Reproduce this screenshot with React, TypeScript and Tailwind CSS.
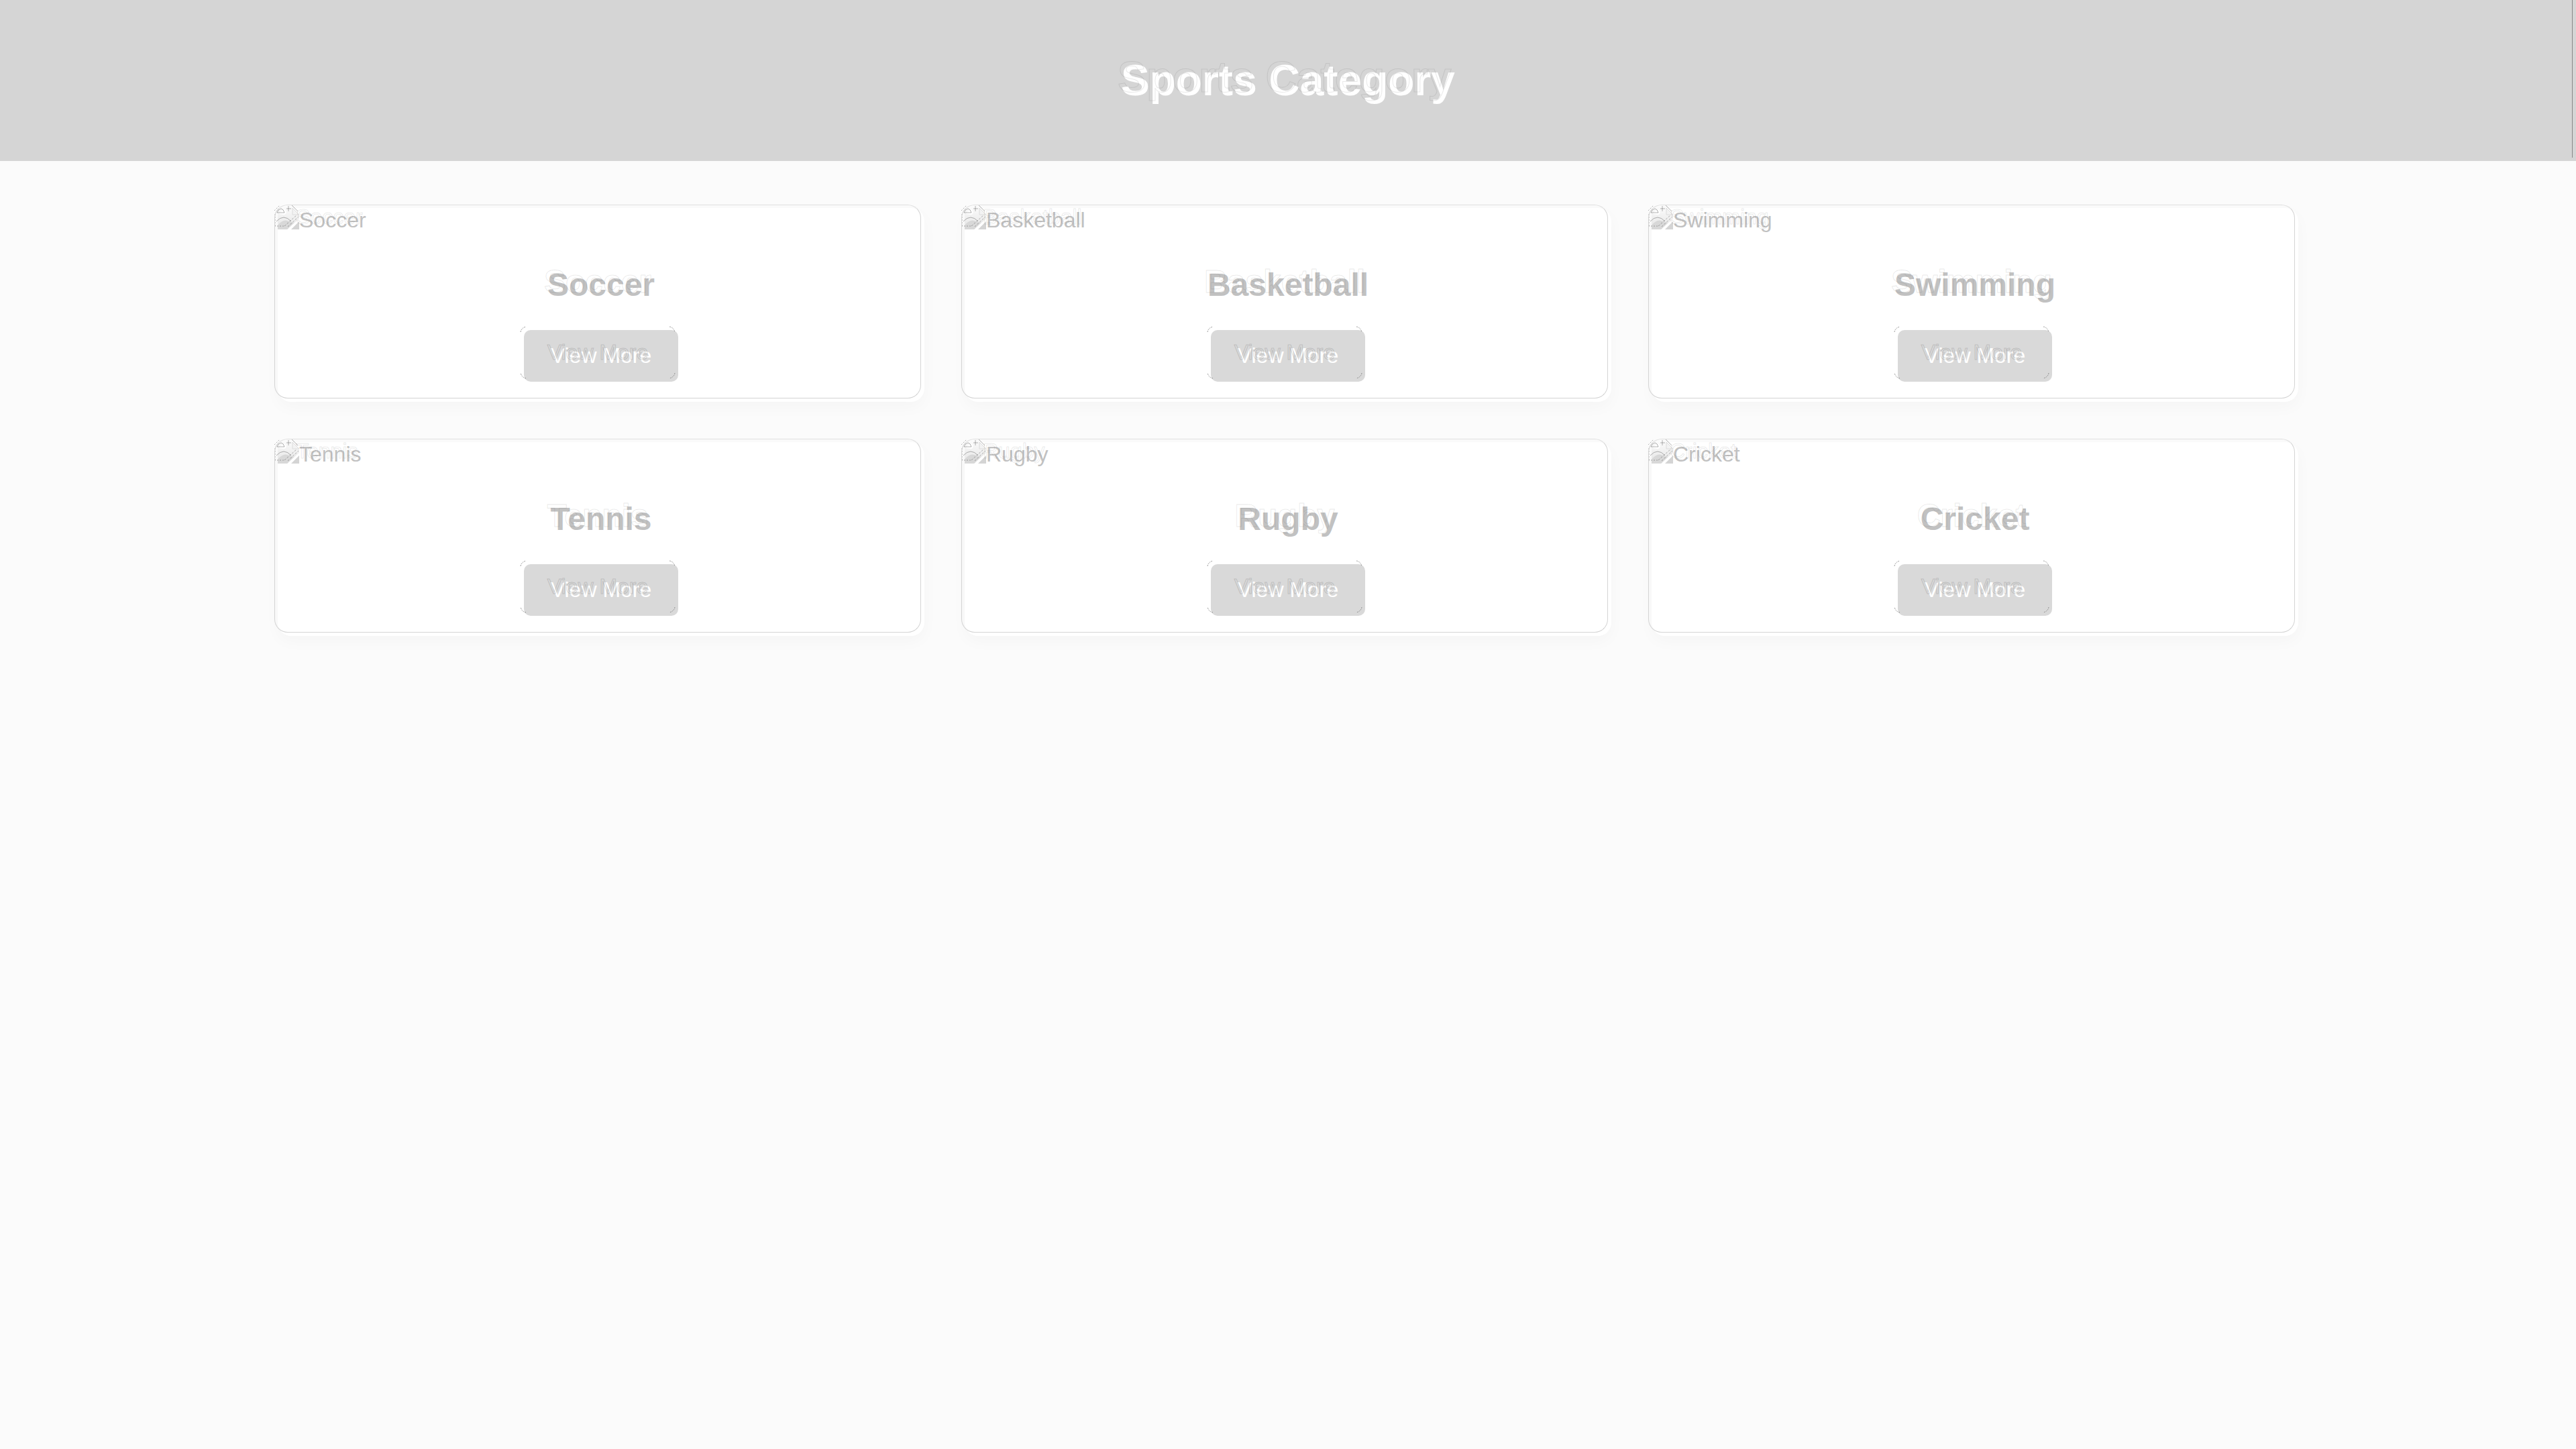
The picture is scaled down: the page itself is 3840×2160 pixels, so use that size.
const sports = ['Soccer', 'Basketball', 'Swimming', 'Tennis', 'Rugby', 'Cricket'];

const echo =
  'relative before:pointer-events-none before:absolute before:-top-[5px] before:-left-[5px] before:whitespace-nowrap before:text-transparent before:content-[attr(data-echo)]';
const faintEcho = 'before:[-webkit-text-stroke:1px_rgba(70,70,70,0.12)]';
const strongEcho = 'before:[-webkit-text-stroke:1px_rgba(70,70,70,0.2)]';

function MissingPicture() {
  return (
    <svg viewBox="0 0 32 32" className="size-8 shrink-0 overflow-visible" aria-hidden="true">
      <defs>
        <linearGradient id="sheet" x1="0" y1="0" x2="0" y2="1">
          <stop offset="0" stopColor="#fafafa" />
          <stop offset="1" stopColor="#e4e4e4" />
        </linearGradient>
      </defs>
      <path d="M0 0H22L32 10V16L14 32H0Z" fill="url(#sheet)" />
      <path d="M0 32V26Q9 14 19 21L24 22L14 32Z" fill="#d8d8d8" />
      <path d="M20 32L32 20V32Z" fill="#d4d4d4" />
      <path d="M22 0V10H32Z" fill="#f3f3f3" stroke="#dcdcdc" />
      <path d="M2 9Q3 5 7 4Q9 0 12 4Q14 8 10 10Z" fill="#fff" />
      <g fill="none" stroke="#555" strokeOpacity="0.45">
        <path d="M-1 7Q0 2 5 1Q9 2 10 7Z" />
        <path d="M-2 20Q9 8 20 20" />
        <path d="M10 27L28 11M15 28L31 13" strokeDasharray="3 2" />
        <path d="M16 -3V5M13 1H20M20 -5L30 5" />
        <path d="M-5 27H9M-4 27V8M-5 4L3 -4" strokeDasharray="2 2" />
      </g>
    </svg>
  );
}

const cornerSpots = [
  '-top-[6px] -left-[6px]',
  '-top-[6px] right-1 rotate-90',
  'right-1 bottom-1 rotate-180',
  '-left-[6px] bottom-1 -rotate-90',
];

function CornerEchoes() {
  return (
    <>
      {cornerSpots.map((spot) => (
        <svg
          key={spot}
          viewBox="0 0 10 10"
          className={`pointer-events-none absolute size-[10px] ${spot}`}
          fill="none"
          stroke="#777"
          strokeOpacity="0.7"
          strokeDasharray="2 1"
          aria-hidden="true"
        >
          <path d="M1 9Q2 3 9 1" />
        </svg>
      ))}
    </>
  );
}

function SportCard({ name }: { name: string }) {
  return (
    <article className="relative flex flex-col items-center rounded-[20px] bg-white pb-[30px] shadow-[0_8px_24px_rgba(0,0,0,0.028)] before:pointer-events-none before:absolute before:-top-[5px] before:-left-[5px] before:h-full before:w-full before:rounded-[20px] before:border before:border-[#d4d4d4] before:border-t-[#e0e0e0] before:content-['']">
      <div className="flex h-[37px] self-stretch">
        <MissingPicture />
        <span data-echo={name} className={`${echo} ${faintEcho} text-[32px] leading-[37px] text-[#c1c1c1]`}>
          {name}
        </span>
      </div>
      <h2
        data-echo={name}
        className={`${echo} ${faintEcho} mt-[50px] mb-10 text-5xl leading-[55px] font-bold text-[#c1c1c1]`}
      >
        {name}
      </h2>
      <button
        type="button"
        className="relative rounded-[10px] bg-[#d9d9d9] px-10 py-5 text-[32px] leading-[37px] text-white"
      >
        <CornerEchoes />
        <span data-echo="View More" className={`${echo} ${strongEcho}`}>
          View More
        </span>
      </button>
    </article>
  );
}

export default function App() {
  return (
    <div className="min-h-screen bg-[#fbfbfb] font-['Liberation_Sans',Arial,sans-serif]">
      <header className="relative bg-[#d5d5d5] py-[83px] text-center before:absolute before:-top-[5px] before:right-[5px] before:h-full before:w-px before:bg-[#888] before:content-['']">
        <h1
          data-echo="Sports Category"
          className={`${echo} ${faintEcho} inline-block align-top text-[64px] leading-[74px] font-bold text-white`}
        >
          Sports Category
        </h1>
      </header>
      <main className="mx-auto grid w-4/5 grid-cols-3 gap-[60px] px-[30px] pt-[70px]">
        {sports.map((name) => (
          <SportCard key={name} name={name} />
        ))}
      </main>
    </div>
  );
}
